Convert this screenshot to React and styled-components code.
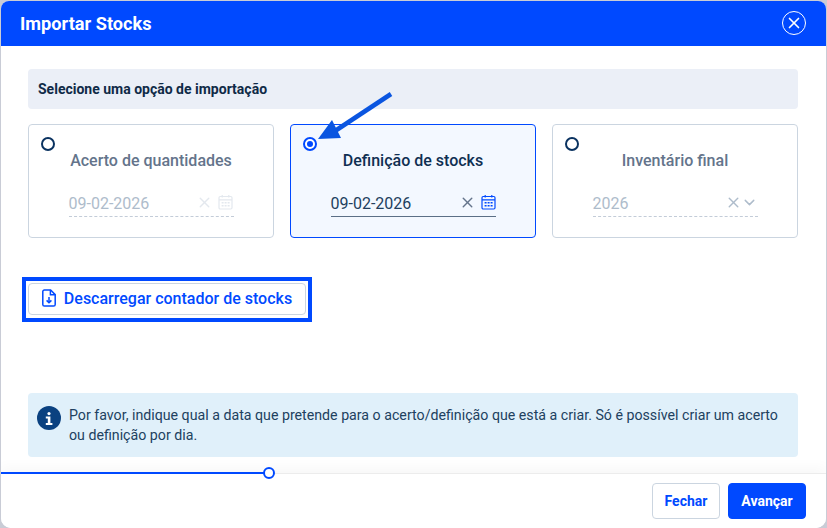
import React from 'react';
import styled, { createGlobalStyle } from 'styled-components';
import { X, ChevronDown } from 'lucide-react';

const Global = createGlobalStyle`
  html, body { margin: 0; padding: 0; height: 100%; background: #c9ccd6; overflow: hidden; }
  * { box-sizing: border-box; }
  #root { height: 100%; }
`;

const Page = styled.div`
  width: 827px;
  height: 528px;
  padding: 1px 1px 0 1px;
  font-family: Roboto, "Liberation Sans", sans-serif;
`;

const Dialog = styled.div`
  position: relative;
  height: 100%;
  background: #fff;
  border-radius: 8px 8px 10px 10px;
  overflow: hidden;
  display: flex;
  flex-direction: column;
`;

const Header = styled.header`
  height: 45px;
  flex: none;
  background: #0049ff;
  display: flex;
  align-items: center;
  justify-content: space-between;
  padding: 0 20px 0 19px;
  color: #fff;
`;

const Title = styled.h1`
  margin: 0;
  font-size: 18.2px;
  font-weight: 700;
`;

const CloseButton = styled.button`
  width: 24px;
  height: 24px;
  margin-top: -1px;
  padding: 0;
  border: 1.5px solid #fff;
  border-radius: 50%;
  background: none;
  color: #fff;
  display: flex;
  align-items: center;
  justify-content: center;
`;

const Body = styled.main`
  flex: 1;
  padding: 23px 28px 0 27px;
  display: flex;
  flex-direction: column;
`;

const SectionBar = styled.div`
  height: 40px;
  flex: none;
  background: #ebeff7;
  border-radius: 4px;
  padding: 0 10px;
  display: flex;
  align-items: center;
  font-size: 14px;
  font-weight: 700;
  color: #0f2a47;
`;

const Cards = styled.div`
  margin-top: 15px;
  display: grid;
  grid-template-columns: repeat(3, 246px);
  gap: 16px;
`;

const Card = styled.div`
  position: relative;
  height: 114px;
  border: 1px solid ${p => (p.$active ? '#0049ff' : '#cbd5e0')};
  background: ${p => (p.$active ? '#f3f8ff' : '#fff')};
  border-radius: 4px;
  display: flex;
  flex-direction: column;
  align-items: center;
  padding-top: 26px;
`;

const Radio = styled.span`
  position: absolute;
  left: 12px;
  top: 12px;
  width: 14px;
  height: 14px;
  border-radius: 50%;
  border: 2px solid ${p => (p.$active ? '#0049ff' : '#0a3260')};
  background: #fff;
  display: flex;
  align-items: center;
  justify-content: center;
  &::after {
    content: '';
    display: ${p => (p.$active ? 'block' : 'none')};
    width: 6px;
    height: 6px;
    border-radius: 50%;
    background: #0049ff;
  }
`;

const CardTitle = styled.div`
  font-size: 16px;
  font-weight: 500;
  line-height: 19px;
  color: ${p => (p.$active ? '#0f2f52' : '#64748b')};
`;

const Field = styled.div`
  width: 165px;
  height: 30px;
  margin-top: 17px;
  padding-top: 4px;
  display: flex;
  align-items: center;
  border-bottom: 1px ${p => (p.$active ? 'solid #5b6f86' : 'dashed #c3ccd8')};
  font-size: 16px;
  color: ${p => (p.$active ? '#223f5e' : '#aebccb')};
`;

const FieldValue = styled.span`
  flex: 1;
`;

const FieldIcons = styled.span`
  display: flex;
  align-items: center;
  margin-top: -3px;
  gap: ${p => p.$gap}px;
  padding-right: ${p => p.$right}px;
  color: ${p => p.$color};
`;

const ClearIcon = styled(X)`
  margin: -3.5px;
`;

const OpenIcon = styled(ChevronDown)`
  margin: -3.5px;
`;

const CalendarIcon = styled.svg`
  width: 15px;
  height: 16px;
  color: ${p => p.$color};
  display: block;
`;

const Highlight = styled.div`
  margin: 39px 0 0 -6px;
  width: 290px;
  height: 45px;
  border: 4px solid #0049ff;
  padding: 2px 2px 3px;
`;

const DownloadButton = styled.button`
  width: 100%;
  height: 100%;
  background: #fff;
  border: 1px solid #cbd5e0;
  border-radius: 4px;
  color: #0049ff;
  font-family: inherit;
  font-size: 16px;
  font-weight: 500;
  display: flex;
  align-items: center;
  justify-content: center;
  gap: 8px;
  padding: 0 0 2px;
`;

const InfoBox = styled.div`
  margin-top: 71px;
  height: 64px;
  background: #e0f0fa;
  border-radius: 4px;
  padding: 13px 10px 0 9px;
  display: flex;
  gap: 8px;
  font-size: 14.2px;
  line-height: 19.5px;
  color: #21415f;
`;

const InfoBadge = styled.span`
  flex: none;
  width: 24px;
  height: 24px;
  border-radius: 50%;
  background: #0a4180;
  color: #fff;
  display: flex;
  align-items: center;
  justify-content: center;
`;

const Footer = styled.footer`
  position: relative;
  height: 55px;
  flex: none;
  background: #fff;
  border-top: 1px solid #ececec;
  box-shadow: 0 -6px 12px rgba(0, 0, 0, 0.03);
  display: flex;
  justify-content: flex-end;
  align-items: flex-start;
  gap: 8px;
  padding: 9px 20px 0 0;
`;

const Progress = styled.div`
  position: absolute;
  left: 0;
  top: -2px;
  width: 263px;
  height: 2px;
  background: #0049ff;
`;

const ProgressKnob = styled.span`
  position: absolute;
  left: 262px;
  top: -7px;
  width: 12px;
  height: 12px;
  border-radius: 50%;
  border: 2px solid #0049ff;
  background: #fff;
`;

const Button = styled.button`
  height: 36px;
  width: ${p => p.$width}px;
  border-radius: 4px;
  border: 1px solid ${p => (p.$primary ? '#0049ff' : '#cbd5e0')};
  background: ${p => (p.$primary ? '#0049ff' : '#fff')};
  color: ${p => (p.$primary ? '#fff' : '#0049ff')};
  font-family: inherit;
  font-size: 14px;
  font-weight: 700;
  padding: 0;
`;

const Arrow = styled.svg`
  position: absolute;
  left: 300px;
  top: 85px;
  width: 100px;
  height: 60px;
  pointer-events: none;
`;

const Calendar = ({ color }) => (
  <CalendarIcon $color={color} viewBox="0 0 15 16" fill="none">
    <rect x="1" y="2.5" width="13" height="12.5" rx="1.2" stroke="currentColor" strokeWidth="1.2" />
    <path d="M1 5.8h13M4.2 1v2.6M10.8 1v2.6" stroke="currentColor" strokeWidth="1.2" />
    <path d="M3.6 8h2v1.5h-2zM6.6 8h2v1.5h-2zM9.6 8h2v1.5h-2zM3.6 11h2v1.5h-2zM6.6 11h2v1.5h-2zM9.6 11h2v1.5h-2z" fill="currentColor" />
  </CalendarIcon>
);

const App = () => (
  <Page>
    <Global />
    <Dialog>
      <Header>
        <Title>Importar Stocks</Title>
        <CloseButton aria-label="Fechar">
          <X size={18} strokeWidth={2.2} />
        </CloseButton>
      </Header>

      <Body>
        <SectionBar>Selecione uma opção de importação</SectionBar>

        <Cards>
          <Card>
            <Radio />
            <CardTitle>Acerto de quantidades</CardTitle>
            <Field>
              <FieldValue>09-02-2026</FieldValue>
              <FieldIcons $color="#e3e8ee" $gap={8} $right={1}>
                <ClearIcon size={17} strokeWidth={2} />
                <Calendar color="#e3e8ee" />
              </FieldIcons>
            </Field>
          </Card>
          <Card $active>
            <Radio $active />
            <CardTitle $active>Definição de stocks</CardTitle>
            <Field $active>
              <FieldValue>09-02-2026</FieldValue>
              <FieldIcons $color="#64748b" $gap={8} $right={0}>
                <ClearIcon size={17} strokeWidth={2} />
                <Calendar color="#0049ff" />
              </FieldIcons>
            </Field>
          </Card>
          <Card>
            <Radio />
            <CardTitle>Inventário final</CardTitle>
            <Field>
              <FieldValue>2026</FieldValue>
              <FieldIcons $color="#aebccb" $gap={6} $right={3}>
                <ClearIcon size={17} strokeWidth={2} />
                <OpenIcon size={17} strokeWidth={2} />
              </FieldIcons>
            </Field>
          </Card>
        </Cards>

        <Highlight>
          <DownloadButton>
            <svg width="14" height="18" viewBox="0 0 14 18" fill="none" stroke="currentColor" strokeWidth="1.5">
              <path d="M8.6 1H2.4A1.6 1.6 0 0 0 .8 2.6v12.8A1.6 1.6 0 0 0 2.4 17h9.2a1.6 1.6 0 0 0 1.6-1.6V5.6z" />
              <path d="M8.4 1v4.8h4.8" />
              <path d="M7 8v5.6" />
              <path d="M4.6 11.4 7 13.8l2.4-2.4" />
            </svg>
            Descarregar contador de stocks
          </DownloadButton>
        </Highlight>

        <InfoBox>
          <InfoBadge>
            <svg width="8" height="13" viewBox="0 0 8 13" fill="#fff">
              <circle cx="4" cy="1.6" r="1.6" />
              <path d="M.8 4.6h4.6V11H7.4v2H.8v-2h2V6.6h-2z" />
            </svg>
          </InfoBadge>
          <span>
            Por favor, indique qual a data que pretende para o acerto/definição que está a criar. Só é possível criar um acerto ou definição por dia.
          </span>
        </InfoBox>
      </Body>

      <Footer>
        <Progress />
        <ProgressKnob />
        <Button $width={68}>Fechar</Button>
        <Button $primary $width={78}>Avançar</Button>
      </Footer>

      <Arrow viewBox="0 0 100 60">
        <path d="M90 8 34 45" stroke="#0a55e0" strokeWidth="4.5" />
        <path d="M17 53 31 34 40 52z" fill="#0a55e0" />
      </Arrow>
    </Dialog>
  </Page>
);

export default App;
